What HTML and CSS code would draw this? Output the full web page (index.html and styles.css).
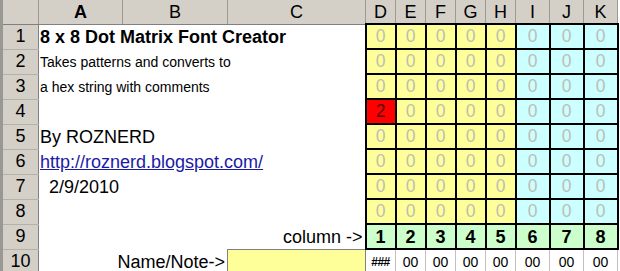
FILE: index.html
```html
<!DOCTYPE html>
<html>
<head>
<meta charset="utf-8">
<link rel="stylesheet" href="styles.css">
</head>
<body>
<table class="sheet">
  <colgroup>
    <col class="c-rh"><col class="c-a"><col class="c-b"><col class="c-c">
    <col class="c-n"><col class="c-n"><col class="c-n"><col class="c-n"><col class="c-n">
    <col class="c-w"><col class="c-w"><col class="c-w">
  </colgroup>
  <tr class="hdr">
    <th class="corner"></th>
    <th class="colh active">A</th><th class="colh">B</th><th class="colh">C</th>
    <th class="colh">D</th><th class="colh">E</th><th class="colh">F</th><th class="colh">G</th><th class="colh">H</th>
    <th class="colh">I</th><th class="colh">J</th><th class="colh">K</th>
  </tr>
  <tr>
    <th class="rowh">1</th>
    <td class="txt title" colspan="3">8 x 8 Dot Matrix Font Creator</td>
    <td class="dot y">0</td><td class="dot y">0</td><td class="dot y">0</td><td class="dot y">0</td><td class="dot y">0</td>
    <td class="dot c">0</td><td class="dot c">0</td><td class="dot c">0</td>
  </tr>
  <tr>
    <th class="rowh">2</th>
    <td class="txt small" colspan="3">Takes patterns and converts to</td>
    <td class="dot y">0</td><td class="dot y">0</td><td class="dot y">0</td><td class="dot y">0</td><td class="dot y">0</td>
    <td class="dot c">0</td><td class="dot c">0</td><td class="dot c">0</td>
  </tr>
  <tr>
    <th class="rowh">3</th>
    <td class="txt small" colspan="3">a hex string with comments</td>
    <td class="dot y">0</td><td class="dot y">0</td><td class="dot y">0</td><td class="dot y">0</td><td class="dot y">0</td>
    <td class="dot c">0</td><td class="dot c">0</td><td class="dot c">0</td>
  </tr>
  <tr>
    <th class="rowh">4</th>
    <td class="txt" colspan="3"></td>
    <td class="dot on">2</td><td class="dot y">0</td><td class="dot y">0</td><td class="dot y">0</td><td class="dot y">0</td>
    <td class="dot c">0</td><td class="dot c">0</td><td class="dot c">0</td>
  </tr>
  <tr>
    <th class="rowh">5</th>
    <td class="txt big" colspan="3">By ROZNERD</td>
    <td class="dot y">0</td><td class="dot y">0</td><td class="dot y">0</td><td class="dot y">0</td><td class="dot y">0</td>
    <td class="dot c">0</td><td class="dot c">0</td><td class="dot c">0</td>
  </tr>
  <tr>
    <th class="rowh">6</th>
    <td class="txt big" colspan="3"><a class="link" href="#">http://roznerd.blogspot.com/</a></td>
    <td class="dot y">0</td><td class="dot y">0</td><td class="dot y">0</td><td class="dot y">0</td><td class="dot y">0</td>
    <td class="dot c">0</td><td class="dot c">0</td><td class="dot c">0</td>
  </tr>
  <tr>
    <th class="rowh">7</th>
    <td class="txt big date" colspan="3">2/9/2010</td>
    <td class="dot y">0</td><td class="dot y">0</td><td class="dot y">0</td><td class="dot y">0</td><td class="dot y">0</td>
    <td class="dot c">0</td><td class="dot c">0</td><td class="dot c">0</td>
  </tr>
  <tr>
    <th class="rowh">8</th>
    <td class="txt" colspan="3"></td>
    <td class="dot y">0</td><td class="dot y">0</td><td class="dot y">0</td><td class="dot y">0</td><td class="dot y">0</td>
    <td class="dot c">0</td><td class="dot c">0</td><td class="dot c">0</td>
  </tr>
  <tr>
    <th class="rowh">9</th>
    <td class="txt big right" colspan="3">column -&gt;</td>
    <td class="num">1</td><td class="num">2</td><td class="num">3</td><td class="num">4</td><td class="num">5</td>
    <td class="num">6</td><td class="num">7</td><td class="num">8</td>
  </tr>
  <tr class="last">
    <th class="rowh">10</th>
    <td class="txt big right" colspan="2">Name/Note-&gt;</td>
    <td class="input"></td>
    <td class="hex hash">###</td><td class="hex">00</td><td class="hex">00</td><td class="hex">00</td><td class="hex">00</td>
    <td class="hex">00</td><td class="hex">00</td><td class="hex">00</td>
  </tr>
</table>
</body>
</html>
```
FILE: styles.css
```css
html, body {
  margin: 0;
  padding: 0;
  background: #ffffff;
}
body {
  width: 620px;
  height: 271px;
  overflow: hidden;
  font-family: "Liberation Sans", Arial, sans-serif;
  color: #000;
}
.sheet {
  border-collapse: collapse;
  table-layout: fixed;
  width: 618px;
}
.c-rh { width: 37px; }
.c-a { width: 84px; }
.c-b { width: 105px; }
.c-c { width: 138px; }
.c-n { width: 30px; }
.c-w { width: 34px; }

.sheet th, .sheet td {
  padding: 0;
  overflow: hidden;
  white-space: nowrap;
}
.hdr th {
  height: 23px;
  background: #d4d0c8;
  font-weight: normal;
  font-size: 18px;
  text-align: center;
  vertical-align: middle;
  border-right: 1px solid #9c9a94;
  border-bottom: 1px solid #808080;
  line-height: 22px;
}
.hdr th.active { font-weight: bold; }
.hdr th.corner {
  border-left: 3px solid #9a9893;
}
.rowh {
  height: 24px;
  background: #d4d0c8;
  font-weight: normal;
  font-size: 18px;
  text-align: center;
  vertical-align: middle;
  border-left: 3px solid #9a9893;
  border-right: 1px solid #808080;
  border-bottom: 1px solid #b4b1aa;
}
.sheet tr td.txt {
  vertical-align: bottom;
  padding-left: 1px;
  padding-bottom: 2px;
  line-height: 20px;
}
.title {
  font-weight: bold;
  font-size: 18px;
}
.small {
  font-size: 14px;
}
.big {
  font-size: 18px;
}
.sheet tr td.date { padding-left: 10px; }
.sheet tr td.right { text-align: right; padding-right: 2px; }
.link {
  color: #1a1aa8;
  text-decoration: underline;
}
.dot {
  border: 2px solid #000;
  text-align: center;
  vertical-align: bottom;
  font-size: 17.5px;
  color: #bdbdb5;
  padding-bottom: 3px !important;
  line-height: 18px;
}
.dot.y { background: #ffff99; }
.dot.c { background: #ccffff; }
.dot.on {
  background: #ff0000;
  color: #5a0000;
}
.num {
  border: 2px solid #000;
  background: #ccffcc;
  text-align: center;
  vertical-align: bottom;
  font-weight: bold;
  font-size: 18px;
  padding-bottom: 2px !important;
  line-height: 18px;
}
.input {
  background: #ffff99;
  border: 1px solid #808080;
  border-bottom: 2px solid #5a5a50;
}
.hex {
  border: 1px solid #c0c0c0;
  border-bottom: 1px solid #7a7a7a;
  text-align: center;
  vertical-align: bottom;
  font-size: 14px;
  padding-bottom: 4px !important;
  line-height: 16px;
}
.hex.hash {
  font-size: 12px;
  font-weight: bold;
  letter-spacing: -0.5px;
}
```
